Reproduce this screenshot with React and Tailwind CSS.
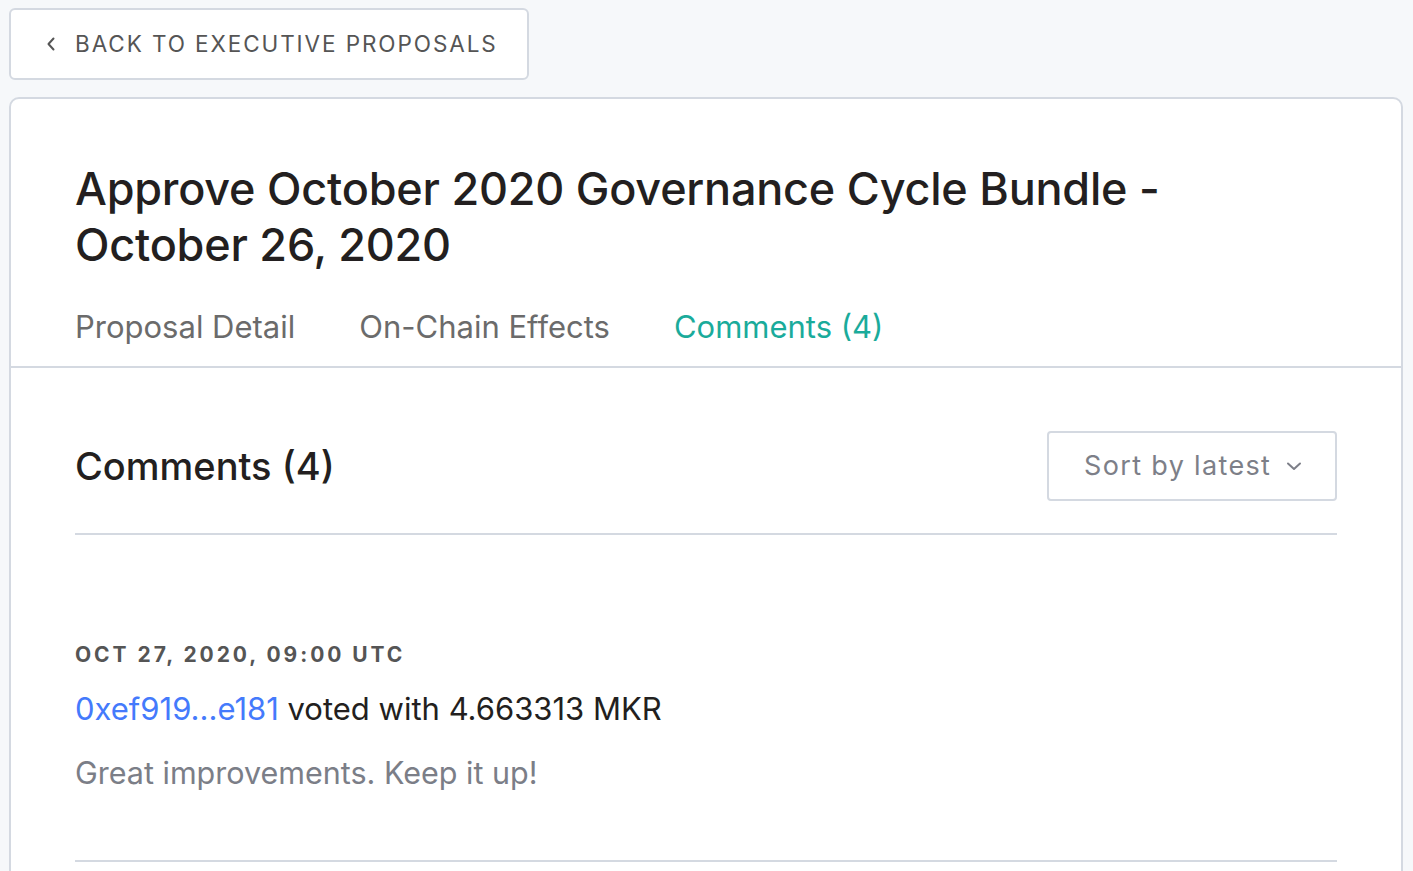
import React from 'react';

const ChevronLeft = () => (
  <svg width="14" height="18" viewBox="0 0 14 18" fill="none" className="shrink-0">
    <path d="M9.5 3.5L4.5 9L9.5 14.5" stroke="#555" strokeWidth="2" strokeLinecap="round" strokeLinejoin="round" />
  </svg>
);

const ChevronDown = () => (
  <svg width="18" height="12" viewBox="0 0 18 12" fill="none" className="shrink-0">
    <path d="M3 3.5L9 9L15 3.5" stroke="#7d7f88" strokeWidth="2" strokeLinecap="round" strokeLinejoin="round" />
  </svg>
);

const App = () => {
  return (
    <div className="min-h-screen bg-[#f6f8fa] px-[9px] pt-[8px] font-['Inter',sans-serif] overflow-hidden">
      {/* Back link */}
      <button className="flex items-center h-[72px] w-[520px] pl-[33px] gap-[17px] bg-white border-2 border-[#d4d9e1] rounded-[6px] text-[#555] text-[22.5px] tracking-[0.085em] uppercase">
        <ChevronLeft />
        <span>Back to Executive Proposals</span>
      </button>

      {/* Card */}
      <div className="mt-[17px] w-[1394px] bg-white border-2 border-[#d4d9e1] rounded-[10px] min-h-[800px]">
        <div className="px-[64px] pt-[62px] border-b-2 border-[#d4d9e1]">
          <h1 className="text-[45px] leading-[56px] font-medium text-[#231f20] tracking-[-0.005em] max-w-[1120px]">
            Approve October 2020 Governance Cycle Bundle - October 26, 2020
          </h1>
          <div className="flex gap-[64px] mt-[35px] pb-[20px] text-[31px] leading-[38px]">
            <span className="text-[#6b6b6b]">Proposal Detail</span>
            <span className="text-[#6b6b6b]">On-Chain Effects</span>
            <span className="text-[#1aab9b]">Comments (4)</span>
          </div>
        </div>

        <div className="px-[64px]">
          <div className="flex items-center justify-between pt-[63px] pb-[32px] border-b-2 border-[#d4d9e1]">
            <h2 className="text-[38px] leading-[44px] font-medium text-[#231f20]">Comments (4)</h2>
            <button className="flex items-center justify-between w-[290px] h-[70px] pl-[35px] pr-[32px] border-2 border-[#d4d9e1] rounded-[4px] text-[27px] tracking-[0.05em] text-[#7d7f88]">
              <span>Sort by latest</span>
              <ChevronDown />
            </button>
          </div>

          <div className="pt-[106px] pb-[67px] border-b-2 border-[#d4d9e1]">
            <div className="text-[21px] leading-[28px] font-bold tracking-[0.14em] text-[#555]">
              OCT 27, 2020, 09:00 UTC
            </div>
            <div className="mt-[20px] text-[31px] leading-[40px] text-[#231f20]">
              <span className="text-[#447afc]">0xef919...e181</span> voted with 4.663313 MKR
            </div>
            <div className="mt-[24px] text-[30.5px] leading-[40px] text-[#7b7e87]">
              Great improvements. Keep it up!
            </div>
          </div>
        </div>
      </div>
    </div>
  );
};

export default App;
